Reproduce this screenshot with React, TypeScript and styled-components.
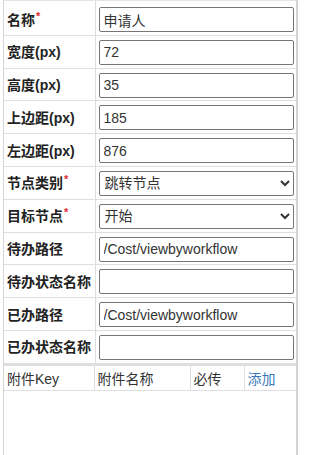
import React from "react";
import styled, { createGlobalStyle } from "styled-components";

const GlobalStyle = createGlobalStyle`
  html, body {
    margin: 0;
    padding: 0;
    background: #fff;
  }
  body {
    font-family: "Liberation Sans", "Noto Sans CJK SC", sans-serif;
    color: #333;
  }
`;

const Panel = styled.div`
  box-sizing: border-box;
  margin-left: 3px;
  width: 295px;
  height: 455px;
  border-top: 1px solid #e2e6ec;
  border-left: 1px solid #d4d4d4;
  border-right: 2px solid #d2d2d2;
`;

const FormTable = styled.table`
  width: 100%;
  border-collapse: collapse;
  table-layout: fixed;
`;

const Row = styled.tr<{ $first?: boolean }>`
  border-bottom: 1px solid #dedede;

  & > td {
    padding-top: ${(p) => (p.$first ? "6px" : "4px")};
    padding-bottom: 2.8px;
  }
`;

const Label = styled.td`
  box-sizing: border-box;
  width: 91px;
  padding-left: 3px;
  padding-right: 0;
  border-right: 1px solid #dedede;
  font-size: 14px;
  line-height: 18px;
  font-weight: bold;
  color: #222;
  white-space: nowrap;
  vertical-align: middle;
`;

const Required = styled.span`
  color: #e8262d;
  font-size: 11px;
  line-height: 11px;
  vertical-align: top;
  margin-left: 1px;
`;

const Field = styled.td`
  padding-left: 3px;
  padding-right: 2px;
  vertical-align: middle;
`;

const TextInput = styled.input`
  box-sizing: border-box;
  display: block;
  width: 100%;
  height: 25px;
  margin: 0;
  padding: 0 4px;
  border: 1px solid #767676;
  border-radius: 2px;
  font-family: "Liberation Sans", "Noto Sans CJK SC", sans-serif;
  font-size: 14px;
  color: #333;
  background: #fff;
  outline: none;
`;

const Dropdown = styled.select`
  box-sizing: border-box;
  display: block;
  width: 100%;
  height: 25px;
  margin: 0;
  padding: 0 1px;
  border: 1px solid #767676;
  border-radius: 2px;
  font-family: "Liberation Sans", "Noto Sans CJK SC", sans-serif;
  font-size: 14px;
  color: #333;
  background: #fff;
`;

const AttachTable = styled.table`
  width: 100%;
  border-collapse: collapse;
  table-layout: fixed;
  border-top: 2px solid #dedede;
`;

const HeadCell = styled.td<{ $w: number; $link?: boolean }>`
  box-sizing: border-box;
  width: ${(p) => p.$w}px;
  height: 26px;
  padding: 0 3px;
  border-right: 1px solid #dedede;
  border-bottom: 1px solid #dedede;
  font-size: 14px;
  color: ${(p) => (p.$link ? "#3a78b9" : "#333")};
  cursor: ${(p) => (p.$link ? "pointer" : "default")};
  white-space: nowrap;
  vertical-align: middle;

  &:last-child {
    border-right: none;
  }
`;

type FieldDef = {
  label: string;
  required?: boolean;
  value?: string;
  options?: string[];
};

const fields: FieldDef[] = [
  { label: "名称", required: true, value: "申请人" },
  { label: "宽度(px)", value: "72" },
  { label: "高度(px)", value: "35" },
  { label: "上边距(px)", value: "185" },
  { label: "左边距(px)", value: "876" },
  { label: "节点类别", required: true, options: ["跳转节点", "审批节点", "结束节点"] },
  { label: "目标节点", required: true, options: ["开始", "结束"] },
  { label: "待办路径", value: "/Cost/viewbyworkflow" },
  { label: "待办状态名称", value: "" },
  { label: "已办路径", value: "/Cost/viewbyworkflow" },
  { label: "已办状态名称", value: "" },
];

function App() {
  return (
    <>
      <GlobalStyle />
      <Panel>
        <FormTable>
          <tbody>
            {fields.map((f, i) => (
              <Row key={f.label} $first={i === 0}>
                <Label>
                  {f.label}
                  {f.required && <Required>*</Required>}
                </Label>
                <Field>
                  {f.options ? (
                    <Dropdown defaultValue={f.options[0]}>
                      {f.options.map((o) => (
                        <option key={o}>{o}</option>
                      ))}
                    </Dropdown>
                  ) : (
                    <TextInput type="text" defaultValue={f.value} />
                  )}
                </Field>
              </Row>
            ))}
          </tbody>
        </FormTable>
        <AttachTable>
          <tbody>
            <tr>
              <HeadCell $w={90}>附件Key</HeadCell>
              <HeadCell $w={96}>附件名称</HeadCell>
              <HeadCell $w={54}>必传</HeadCell>
              <HeadCell $w={52} $link>添加</HeadCell>
            </tr>
          </tbody>
        </AttachTable>
      </Panel>
    </>
  );
}

export default App;
